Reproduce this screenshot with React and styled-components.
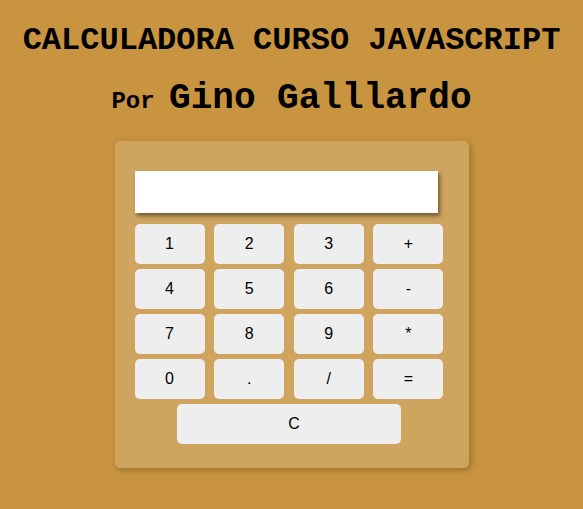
import React from 'react';
import styled, {createGlobalStyle} from "styled-components";

const GlobalStyle = createGlobalStyle`
  html, body {
    margin: 0;
    padding: 0;
    background: #C8943F;
  }
  body {
    font-family: "Liberation Sans", Arial, sans-serif;
  }
`;

const Page = styled.div`
  width: 583px;
  height: 509px;
  display: flex;
  flex-direction: column;
  align-items: center;
`;

const Title = styled.h1`
  font-family: "Liberation Mono", "Courier New", monospace;
  font-weight: bold;
  font-size: 32px;
  line-height: 36px;
  margin: 23px 0 0 0;
  color: #000;
  text-align: center;
`;

const Author = styled.h2`
  font-family: "Liberation Mono", "Courier New", monospace;
  font-weight: bold;
  font-size: 36px;
  line-height: 40px;
  margin: 20px 0 0 0;
  color: #000;
  text-align: center;
`;

const Small = styled.span`
  font-size: 24px;
  white-space: pre;
`;

const Panel = styled.div`
  margin-top: 19px;
  width: 354px;
  box-sizing: border-box;
  padding: 30px 25px 24px 20px;
  background: #CFA45F;
  border-radius: 5px;
  box-shadow: 2px 2px 6px rgba(0, 0, 0, 0.25);
`;

const Display = styled.input`
  display: block;
  width: 303px;
  height: 42px;
  box-sizing: border-box;
  border: none;
  outline: none;
  background: #fff;
  box-shadow: 2px 3px 4px rgba(0, 0, 0, 0.45);
  margin-bottom: 11px;
`;

const Keys = styled.div`
  display: grid;
  grid-template-columns: repeat(4, 70px);
  grid-auto-rows: 40px;
  column-gap: 9.67px;
  row-gap: 5px;
  width: 309px;
`;

const Key = styled.button`
  border: none;
  border-radius: 5px;
  background: #EEEEEE;
  font-family: "Liberation Sans", Arial, sans-serif;
  font-size: 16px;
  color: #000;
  padding: ${p => p.$wide ? "0 0 0 10px" : "0"};
  grid-column: ${p => p.$wide ? "span 4" : "auto"};
  justify-self: ${p => p.$wide ? "center" : "stretch"};
  width: ${p => p.$wide ? "224px" : "auto"};
`;

const keys = ["1", "2", "3", "+", "4", "5", "6", "-", "7", "8", "9", "*", "0", ".", "/", "="];

const App = () => {
    return (
        <Page>
            <GlobalStyle/>
            <Title>CALCULADORA CURSO JAVASCRIPT</Title>
            <Author><Small>Por </Small>Gino Galllardo</Author>
            <Panel>
                <Display type="text" readOnly/>
                <Keys>
                    {keys.map(k => <Key key={k}>{k}</Key>)}
                    <Key $wide>C</Key>
                </Keys>
            </Panel>
        </Page>
    );
};

export default App;
